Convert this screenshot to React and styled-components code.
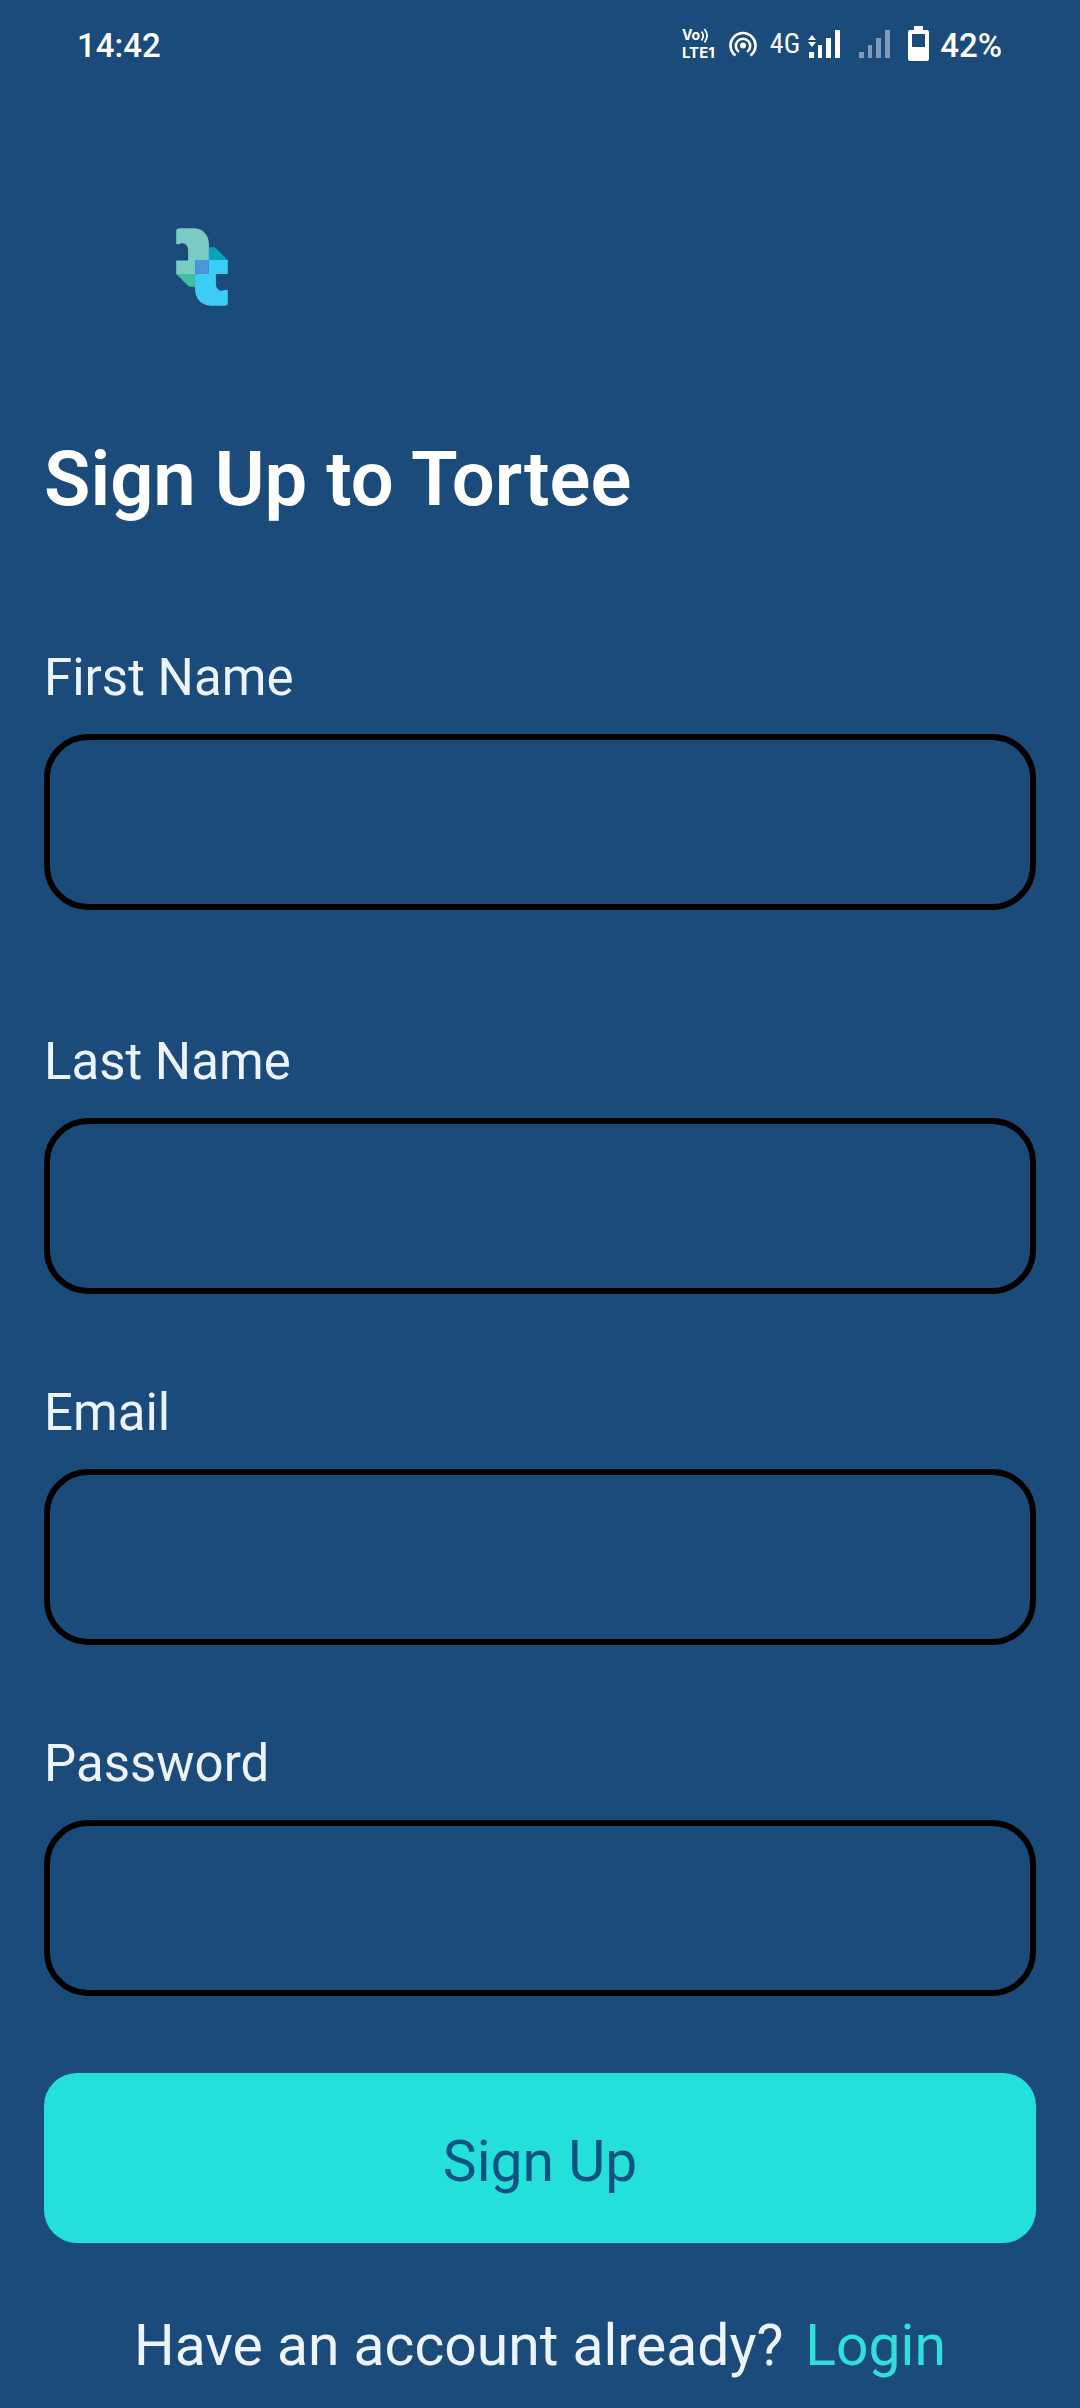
import React, { useId } from "react";
import styled, { createGlobalStyle } from "styled-components";

const GlobalStyle = createGlobalStyle`
  *, *::before, *::after { box-sizing: border-box; }
  body {
    margin: 0;
    background: #1b4b7b;
    color: #edf4ff;
    font-family: Roboto, "Noto Sans", sans-serif;
  }
`;

const Screen = styled.div`
  display: flex;
  flex-direction: column;
  min-height: 100vh;
`;

const StatusBar = styled.header`
  display: flex;
  align-items: center;
  justify-content: space-between;
  padding: 24px 78px 0 77px;
  color: #fff;
  font-size: 33px;
  font-weight: 500;
  line-height: 44px;
`;

const StatusGroup = styled.div`
  display: flex;
  align-items: center;
`;

const StatusIcon = styled.svg`
  display: block;
  flex: none;
  margin-right: ${(p) => p.$gap}px;
  margin-bottom: 5px;
`;

const Network = styled.span`
  margin-right: 8px;
  padding-bottom: 4px;
  font-family: "Roboto Condensed", Roboto, sans-serif;
  font-size: 28px;
  font-weight: 400;
  line-height: 40px;
`;

const Content = styled.main`
  display: flex;
  flex-direction: column;
  padding: 160px 44px 28px;
`;

const Logo = styled.svg`
  display: block;
  margin-left: 132px;
`;

const Title = styled.h1`
  margin: 128px 0 0;
  color: #fff;
  font-size: 76px;
  font-weight: 600;
  line-height: 90px;
`;

const Form = styled.form`
  display: flex;
  flex-direction: column;
  margin-top: 124px;
`;

const Field = styled.div`
  display: flex;
  flex-direction: column;
  gap: 26px;
  margin-bottom: ${(p) => (p.$wide ? 122 : 89)}px;

  &:last-of-type { margin-bottom: 77px; }
`;

const Label = styled.label`
  font-size: 51px;
  line-height: 60px;
`;

const Input = styled.input`
  width: 100%;
  height: 176px;
  padding: 0 40px;
  border: 6px solid #000;
  border-radius: 44px;
  outline: none;
  background: transparent;
  color: #edf4ff;
  font: inherit;
  font-size: 51px;
`;

const Submit = styled.button`
  height: 170px;
  padding: 8px 0 0;
  border: 0;
  border-radius: 33px;
  background: #24e0db;
  color: #0d5380;
  font: inherit;
  font-size: 57px;
  line-height: 66px;
  cursor: pointer;
`;

const Footer = styled.p`
  display: flex;
  justify-content: center;
  gap: 22px;
  margin: 70px 0 0;
  font-size: 57px;
  line-height: 66px;
`;

const LoginLink = styled.a`
  color: #2fdfdc;
  text-decoration: none;
`;

const fields = [
  { name: "firstName", label: "First Name", type: "text", wide: true },
  { name: "lastName", label: "Last Name", type: "text" },
  { name: "email", label: "Email", type: "email" },
  { name: "password", label: "Password", type: "password" },
];

function FormField({ name, label, type, wide }) {
  const id = useId();
  return (
    <Field $wide={wide}>
      <Label htmlFor={id}>{label}</Label>
      <Input id={id} name={name} type={type} />
    </Field>
  );
}

function VolteIcon() {
  return (
    <StatusIcon $gap={11} width="36" height="38" viewBox="0 -5 36 38" fill="#fff" aria-hidden="true">
      <text x="0" y="10" fontFamily="Inter, sans-serif" fontSize="14" fontWeight="700">Vo</text>
      <path d="M19.500 1.500q3.500 4 0 9M22.500 -1q5 6.500 0 13.500" fill="none" stroke="#fff" strokeWidth="1.800" />
      <text x="0" y="28" fontFamily="Inter, sans-serif" fontSize="15" fontWeight="700">LTE1</text>
    </StatusIcon>
  );
}

function HotspotIcon() {
  return (
    <StatusIcon $gap={13} width="28" height="26" viewBox="0 0 28 26" fill="none" stroke="#fff" strokeWidth="2.600" aria-hidden="true">
      <circle cx="14" cy="14.500" r="3" fill="#fff" stroke="none" />
      <path d="M10 21a7.200 7.200 0 1 1 8 0" />
      <path d="M6.500 24.500a12.500 12.500 0 1 1 15 0" />
    </StatusIcon>
  );
}

function SignalIcon() {
  return (
    <StatusIcon $gap={19} width="32" height="28" viewBox="0 0 32 28" fill="#fff" aria-hidden="true">
      <path d="M4 5l4 5H0zM4 17l4-5H0z" />
      <path d="M1 22h5v6H1zM10 15h4v13h-4zM18 8h5v20h-5zM27 0h5v28h-5z" />
    </StatusIcon>
  );
}

function WeakSignalIcon() {
  return (
    <StatusIcon $gap={18} width="31" height="28" viewBox="0 0 31 28" fill="#7f9abb" aria-hidden="true">
      <path d="M0 22h5v6H0zM9 15h4v13H9zM17 8h5v20h-5zM26 0h5v28h-5z" />
    </StatusIcon>
  );
}

function BatteryIcon() {
  return (
    <StatusIcon $gap={11} width="21" height="35" viewBox="0 0 21 35" fill="#fff" aria-hidden="true">
      <path fillRule="evenodd" d="M6 0h9v4h4q2 0 2 2v27q0 2-2 2H2q-2 0-2-2V6q0-2 2-2h4zM4 8v13h13V8z" />
    </StatusIcon>
  );
}

function TorteeLogo() {
  return (
    <Logo width="52" height="78" viewBox="48 38 156 236" role="img" aria-label="Tortee">
      <path fill="#7acbc3" d="M48 44Q50 39 58 39H98C132 39 147 62 147 88V136H105V178H48V136H84V106C84 90 76 84 64 84Q60 87 48 87Z" />
      <path fill="#08a3bb" d="M147 96H165L204 135V136H147Z" />
      <path fill="#3fbfa3" d="M48 177H105V216H87Z" />
      <path fill="#3bcdf5" d="M147 135H204V177H168V206C168 222 176 228 188 228Q192 225 204 225V268Q202 273 194 273H154C122 273 105 250 105 222V177H147Z" />
      <path fill="#4a96d6" d="M105 135H147V177H105Z" />
    </Logo>
  );
}

export default function App() {
  return (
    <Screen>
      <GlobalStyle />
      <StatusBar>
        <time>14:42</time>
        <StatusGroup>
          <VolteIcon />
          <HotspotIcon />
          <Network>4G</Network>
          <SignalIcon />
          <WeakSignalIcon />
          <BatteryIcon />
          <span>42%</span>
        </StatusGroup>
      </StatusBar>
      <Content>
        <TorteeLogo />
        <Title>Sign Up to Tortee</Title>
        <Form onSubmit={(event) => event.preventDefault()}>
          {fields.map((field) => (
            <FormField key={field.name} {...field} />
          ))}
          <Submit type="submit">Sign Up</Submit>
        </Form>
        <Footer>
          <span>Have an account already?</span>
          <LoginLink href="#login">Login</LoginLink>
        </Footer>
      </Content>
    </Screen>
  );
}
